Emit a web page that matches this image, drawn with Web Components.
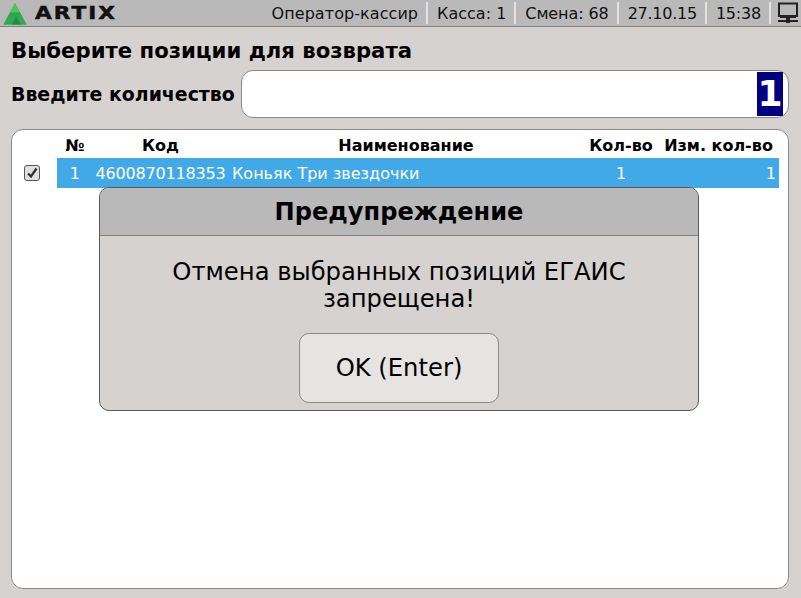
<!DOCTYPE html>
<html>
<head>
<meta charset="utf-8">
<title>Artix</title>
<style>
  html, body { margin: 0; height: 100%; }
  body { background: #d6d2cf; font-family: "DejaVu Sans", sans-serif; color: #000; overflow: hidden; }
</style>
</head>
<body>
<artix-screen>
  <artix-topbar slot="top">
    <artix-cell style="letter-spacing:.07px">Оператор-кассир</artix-cell>
    <artix-cell>Касса: 1</artix-cell>
    <artix-cell style="letter-spacing:-.1px">Смена: 68</artix-cell>
    <artix-cell style="letter-spacing:-.25px">27.10.15</artix-cell>
    <artix-cell style="letter-spacing:-.2px">15:38</artix-cell>
  </artix-topbar>
  <artix-quantity slot="form" label="Введите количество" value="1"></artix-quantity>
  <artix-table slot="table"></artix-table>
  <artix-dialog slot="overlay" heading="Предупреждение">
    Отмена выбранных позиций ЕГАИС<br>запрещена!
    <artix-button slot="actions">OK (Enter)</artix-button>
  </artix-dialog>
</artix-screen>

<script>
// Screen frame: top bar, page title, form, table and the warning above them
class ArtixScreen extends HTMLElement {
  constructor() {
    super();
    this.attachShadow({ mode: 'open' });
    this.shadowRoot.innerHTML = `
      <style>
        :host { display: block; position: relative; width: 801px; height: 598px; }
        main { display: flex; flex-direction: column; height: 571px; box-sizing: border-box; padding: 0 12px 9px 11px; }
        h1 { margin: 0; font-size: 21.2px; line-height: 24px; font-weight: 700; padding-top: 12px; height: 43px; box-sizing: border-box; white-space: nowrap; }
        ::slotted([slot="table"]) { flex: 1; margin-top: 11px; }
      </style>
      <slot name="top"></slot>
      <main>
        <h1>Выберите позиции для возврата</h1>
        <slot name="form"></slot>
        <slot name="table"></slot>
      </main>
      <slot name="overlay"></slot>
    `;
  }
}

class ArtixTopbar extends HTMLElement {
  constructor() {
    super();
    this.attachShadow({ mode: 'open' });
    this.shadowRoot.innerHTML = `
      <style>
        :host { display: flex; align-items: center; height: 27px; box-sizing: border-box; background: #b9b9b9; border-bottom: 1px solid #808080; }
        .logo { display: flex; align-items: center; gap: 8px; padding-left: 3px; flex: 1; }
        .logo svg { display: block; }
        .name { font-size: 18px; line-height: 20px; font-weight: 700; letter-spacing: 1.7px; transform: scaleX(1.2); transform-origin: left; color: #111; -webkit-text-stroke: 0.5px #111; }
        .cells { display: flex; align-items: center; }
        .net { display: block; margin: 0 3px 0 7px; }
      </style>
      <div class="logo">
        <svg width="24" height="24" viewBox="0 0 24 24">
          <polygon points="12,2 23.5,23.5 0.5,23.5" fill="#37b24a"/>
          <polygon points="12,2 17,11.5 7,11.5" fill="#4ac95a"/>
          <polygon points="7,11.5 17,11.5 20,17.5 4,17.5" fill="#2fa84c"/>
          <polygon points="4,17.5 20,17.5 23.5,23.5 0.5,23.5" fill="#33a850"/>
          <polygon points="9,23.5 13,16 18,23.5" fill="#1f8a4a"/>
        </svg>
        <span class="name">ARTIX</span>
      </div>
      <div class="cells"><slot></slot></div>
      <svg class="net" width="20" height="22" viewBox="0 0 20 22">
        <path d="M1 1.5h18v12.5H1z" fill="none" stroke="#222" stroke-width="2"/>
        <rect x="2" y="14" width="16" height="2" fill="#222"/>
        <rect x="8" y="16" width="4" height="5" fill="#222"/>
        <rect x="0" y="18" width="20" height="2" fill="#222"/>
      </svg>
    `;
  }
}

class ArtixCell extends HTMLElement {
  constructor() {
    super();
    this.attachShadow({ mode: 'open' });
    this.shadowRoot.innerHTML = `
      <style>
        :host { display: flex; align-items: center; height: 22px; padding: 0 8px 0 9px; font-size: 16px; color: #111; border-right: 2px solid #e4e2e0; white-space: nowrap; }
      </style>
      <slot></slot>
    `;
  }
}

class ArtixQuantity extends HTMLElement {
  constructor() {
    super();
    this.attachShadow({ mode: 'open' });
    this.shadowRoot.innerHTML = `
      <style>
        :host { display: flex; align-items: center; height: 48px; }
        label { width: 230px; font-size: 18.9px; font-weight: 700; white-space: nowrap; }
        .field { flex: 1; height: 48px; box-sizing: border-box; background: #fff; border: 1px solid #8a8a8a; border-radius: 12px; display: flex; justify-content: flex-end; align-items: center; padding-right: 5px; }
        .value { background: #000080; color: #fff; font-size: 36px; font-weight: 700; line-height: 44px; height: 44px; width: 26px; text-align: center; overflow: hidden; }
      </style>
      <label></label>
      <div class="field"><span class="value"></span></div>
    `;
    this.shadowRoot.querySelector('label').textContent = this.getAttribute('label');
    this.shadowRoot.querySelector('.value').textContent = this.getAttribute('value');
  }
}

class ArtixTable extends HTMLElement {
  constructor() {
    super();
    this.attachShadow({ mode: 'open' });
    this.shadowRoot.innerHTML = `
      <style>
        :host { display: block; box-sizing: border-box; background: #fff; border: 1px solid #8a8a8a; border-radius: 12px; font-size: 16px; padding-right: 9px; }
        .row { display: grid; grid-template-columns: 45px 36px 135px 354px 78px 119px; align-items: center; }
        .head { height: 28px; box-sizing: border-box; padding-top: 2px; font-weight: 700; }
        .body { height: 30px; }
        .cell { white-space: nowrap; }
        .sel { background: #42a9e8; color: #fff; height: 30px; line-height: 32px; }
        .check { display: flex; justify-content: center; width: 40px; }
        .box { width: 14px; height: 14px; border: 1px solid #555; border-radius: 3px; background: #e2e0de; display: block; }
        .c { text-align: center; }
        .r { text-align: right; }
      </style>
      <div class="row head">
        <span></span>
        <span class="cell c">№</span>
        <span class="cell c">Код</span>
        <span class="cell c" style="padding-left:2px">Наименование</span>
        <span class="cell c">Кол-во</span>
        <span class="cell c" style="padding-right:2px">Изм. кол-во</span>
      </div>
      <div class="row body">
        <span class="check">
          <svg class="box" viewBox="0 0 14 14"><path d="M3 7.5 L6 10.5 L11.5 2.5" fill="none" stroke="#333" stroke-width="2.4"/></svg>
        </span>
        <span class="cell sel r" style="padding-right:13px">1</span>
        <span class="cell sel c" style="letter-spacing:-.18px">4600870118353</span>
        <span class="cell sel" style="padding-left:4px">Коньяк Три звездочки</span>
        <span class="cell sel c">1</span>
        <span class="cell sel r" style="padding-right:3px">1</span>
      </div>
    `;
  }
}

class ArtixDialog extends HTMLElement {
  constructor() {
    super();
    this.attachShadow({ mode: 'open' });
    this.shadowRoot.innerHTML = `
      <style>
        :host { display: block; position: absolute; left: 99px; top: 187px; width: 600px; height: 224px; box-sizing: border-box; background: #d6d2cf; border: 1px solid #5a5a5a; border-radius: 10px; overflow: hidden; }
        header { height: 48px; box-sizing: border-box; background: #b9b9b9; border-bottom: 1px solid #808080; display: flex; align-items: center; justify-content: center; font-size: 24.1px; font-weight: 700; }
        .msg { text-align: center; font-size: 24.25px; line-height: 27px; padding-top: 22px; height: 97px; box-sizing: border-box; }
        .actions { display: flex; justify-content: center; }
      </style>
      <header></header>
      <div class="msg"><slot></slot></div>
      <div class="actions"><slot name="actions"></slot></div>
    `;
    this.shadowRoot.querySelector('header').textContent = this.getAttribute('heading');
  }
}

class ArtixButton extends HTMLElement {
  constructor() {
    super();
    this.attachShadow({ mode: 'open' });
    this.shadowRoot.innerHTML = `
      <style>
        :host { display: flex; align-items: center; justify-content: center; width: 200px; height: 70px; box-sizing: border-box; padding-bottom: 2px; background: #e6e4e1; border: 1px solid #8a8a8a; border-radius: 10px; font-size: 24.25px; }
      </style>
      <slot></slot>
    `;
  }
}

customElements.define('artix-screen', ArtixScreen);
customElements.define('artix-topbar', ArtixTopbar);
customElements.define('artix-cell', ArtixCell);
customElements.define('artix-quantity', ArtixQuantity);
customElements.define('artix-table', ArtixTable);
customElements.define('artix-dialog', ArtixDialog);
customElements.define('artix-button', ArtixButton);
</script>
</body>
</html>
